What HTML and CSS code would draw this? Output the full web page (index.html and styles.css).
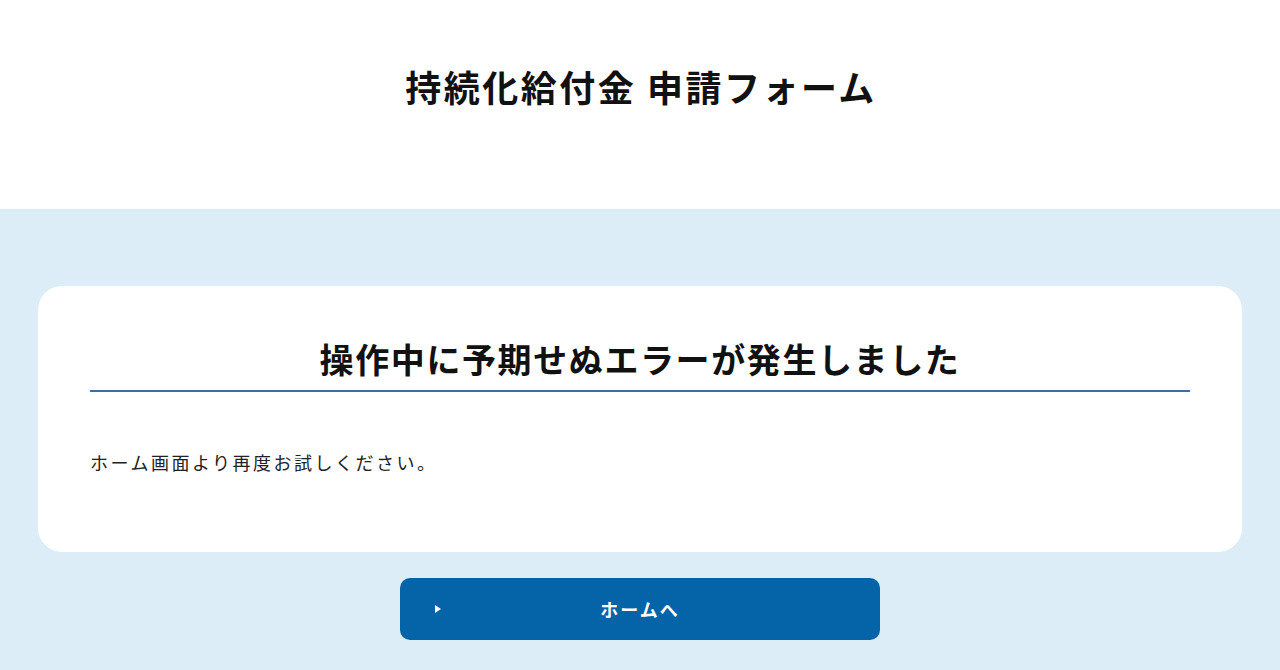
FILE: index.html
```html
<!DOCTYPE html>
<html lang="ja">
<head>
<meta charset="utf-8">
<title>持続化給付金 申請フォーム</title>
<link rel="stylesheet" href="styles.css">
</head>
<body>
<header class="site-header">
  <h1 class="site-title">持続化給付金 申請フォーム</h1>
</header>
<main class="main">
  <section class="card">
    <h2 class="card-title">操作中に予期せぬエラーが発生しました</h2>
    <p class="card-text">ホーム画面より再度お試しください。</p>
  </section>
  <a class="home-btn" href="#">
    <span class="home-btn-icon"><svg width="8" height="10" viewBox="0 0 8 10"><path d="M1 1 L7 5 L1 9 Z" fill="#fff"/></svg></span>
    <span class="home-btn-label">ホームへ</span>
  </a>
</main>
</body>
</html>
```
FILE: styles.css
```css
* { box-sizing: border-box; }
html, body { margin: 0; padding: 0; }
body {
  font-family: "Noto Sans CJK JP", "Noto Sans", sans-serif;
  color: #111;
  background: #dcedf7;
  height: 670px;
  overflow: hidden;
}
.site-header {
  background: #fff;
  height: 209px;
  display: flex;
  justify-content: center;
  padding-top: 60px;
}
.site-title {
  margin: 0;
  font-size: 36px;
  font-weight: 700;
  letter-spacing: 2.5px;
  line-height: 52px;
  height: 52px;
  padding-left: 2px;
}
.main {
  padding: 77px 38px 0;
  display: flex;
  flex-direction: column;
  align-items: center;
}
.card {
  width: 100%;
  height: 266px;
  background: #fff;
  border-radius: 24px;
  padding: 50px 52px 0;
}
.card-title {
  margin: 0;
  text-align: center;
  font-size: 34px;
  font-weight: 700;
  letter-spacing: 1.6px;
  line-height: 46px;
  padding-bottom: 8px;
  border-bottom: 2px solid #3d6f97;
}
.card-text {
  margin: 57px 0 0;
  font-size: 18px;
  letter-spacing: 2.5px;
  line-height: 26px;
  color: #222;
}
.home-btn {
  margin-top: 26px;
  width: 480px;
  height: 62px;
  background: #0563a8;
  border-radius: 10px;
  display: flex;
  align-items: center;
  text-decoration: none;
  color: #fff;
  padding: 0 34px;
}
.home-btn-icon {
  display: flex;
  align-items: center;
  width: 10px;
}
.home-btn-label {
  flex: 1;
  text-align: center;
  font-size: 18px;
  font-weight: 700;
  letter-spacing: 2px;
  margin-right: 10px;
}
```
